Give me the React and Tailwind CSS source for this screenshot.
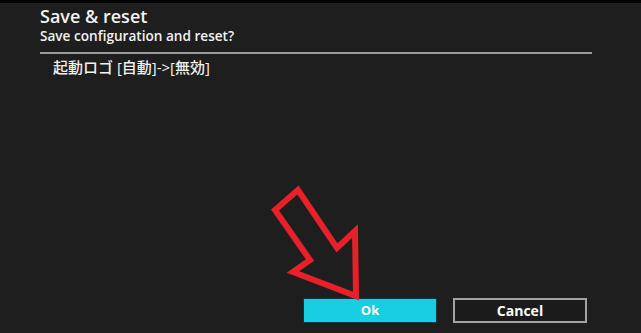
export default function App() {
  return (
    <div className="relative flex h-[333px] w-[641px] flex-col border-t-[3px] border-black bg-[#1e1e1e] pl-[40px] pr-[49px] font-['Open_Sans',sans-serif] text-[#f2f2f2]">
      {/* header */}
      <div className="mt-[3px] text-[18px] leading-[21px] font-semibold">Save &amp; reset</div>
      <div className="text-[13.6px] leading-[18px] font-semibold">Save configuration and reset?</div>
      <div className="mt-[7px] h-[2px] bg-[#9b9b9b]" />

      {/* changes */}
      <div className="mt-[3px] pl-[13px] font-['Open_Sans','Noto_Sans_CJK_JP',sans-serif] text-[15px] leading-[20px] font-medium">
        起動ロゴ [自動]-&gt;[無効]
      </div>

      {/* buttons */}
      <div className="mt-auto mb-[10px] flex justify-end gap-[16px] pr-[5px]">
        <button className="h-[25px] w-[134px] border border-[#0d3940] bg-[#17cee2] text-[13px] font-bold text-white">
          Ok
        </button>
        <button className="h-[25px] w-[134px] border-2 border-[#a3a3a3] bg-[#1b1b1b] text-[14px] font-bold text-white">
          Cancel
        </button>
      </div>

      {/* annotation arrow */}
      <svg
        className="pointer-events-none absolute left-0 top-[-3px]"
        width="641"
        height="333"
        viewBox="0 0 641 333"
      >
        <polygon
          points="275,210 298,190 337,248 355,231 356,296 293,272 310,260"
          fill="none"
          stroke="#e8202a"
          strokeWidth="6"
          strokeLinejoin="miter"
        />
      </svg>
    </div>
  );
}
